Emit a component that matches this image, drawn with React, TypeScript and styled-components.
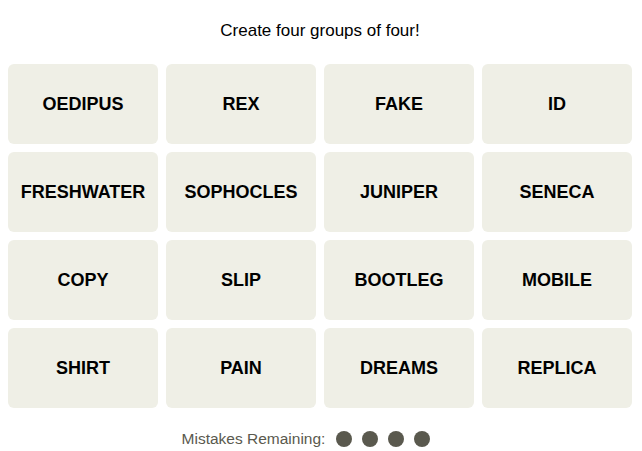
import styled, { createGlobalStyle } from 'styled-components'

const GlobalStyle = createGlobalStyle`
  html, body {
    margin: 0;
    padding: 0;
    background: #ffffff;
  }
  body {
    font-family: "Liberation Sans", Arial, sans-serif;
    color: #000000;
  }
`

const words = [
  'OEDIPUS', 'REX', 'FAKE', 'ID',
  'FRESHWATER', 'SOPHOCLES', 'JUNIPER', 'SENECA',
  'COPY', 'SLIP', 'BOOTLEG', 'MOBILE',
  'SHIRT', 'PAIN', 'DREAMS', 'REPLICA',
]

const Page = styled.div`
  width: 642px;
  padding: 0 10px 0 8px;
  box-sizing: border-box;
`

const Title = styled.p`
  margin: 0;
  padding-top: 21px;
  height: 64px;
  box-sizing: border-box;
  text-align: center;
  font-size: 17px;
  line-height: 20px;
`

const Board = styled.div`
  display: grid;
  grid-template-columns: repeat(4, 150px);
  grid-auto-rows: 80px;
  gap: 8px;
`

const Tile = styled.button`
  display: flex;
  align-items: center;
  justify-content: center;
  border: none;
  border-radius: 6px;
  background: #efefe6;
  color: #000000;
  font-family: "Liberation Sans", Arial, sans-serif;
  font-weight: 700;
  font-size: 18px;
  text-transform: uppercase;
  padding: 0;
  cursor: pointer;
`

const Mistakes = styled.div`
  display: flex;
  align-items: center;
  justify-content: center;
  gap: 10px;
  margin-top: 23px;
  padding-right: 28px;
  font-size: 15.5px;
  line-height: 16px;
  color: #5a594e;
`

const Label = styled.span`
  margin-right: 1px;
`

const Dot = styled.span`
  width: 16px;
  height: 16px;
  border-radius: 50%;
  background: #5a594e;
`

const App = () => (
  <Page>
    <GlobalStyle />
    <Title>Create four groups of four!</Title>
    <Board>
      {words.map((w) => (
        <Tile key={w}>{w}</Tile>
      ))}
    </Board>
    <Mistakes>
      <Label>Mistakes Remaining:</Label>
      {[0, 1, 2, 3].map((i) => (
        <Dot key={i} />
      ))}
    </Mistakes>
  </Page>
)

export default App
